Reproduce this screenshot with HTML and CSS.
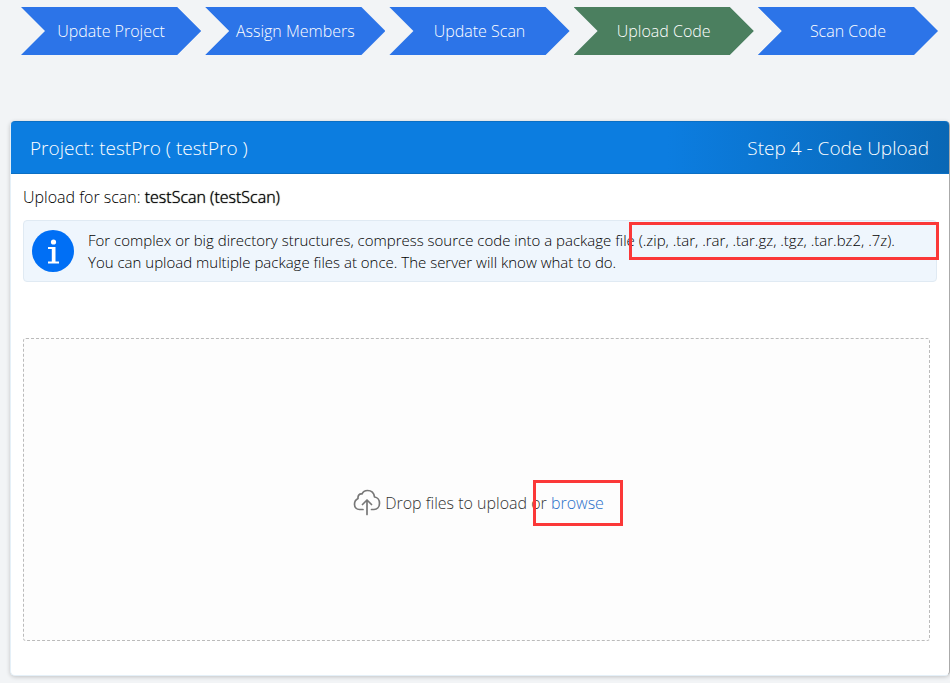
FILE: index.html
```html
<!DOCTYPE html>
<html lang="en">
<head>
<meta charset="utf-8">
<title>Code Upload</title>
<link rel="stylesheet" href="styles.css">
</head>
<body>
<nav class="steps">
  <a class="step" href="#">Update Project</a>
  <a class="step" href="#">Assign Members</a>
  <a class="step" href="#">Update Scan</a>
  <a class="step step-current" href="#">Upload Code</a>
  <a class="step" href="#">Scan Code</a>
</nav>
<main class="panel">
  <header class="panel-header">
    <h1 class="panel-title">Project: testPro ( testPro )</h1>
    <span class="panel-title">Step 4 - Code Upload</span>
  </header>
  <div class="panel-body">
    <p class="scan-name">Upload for scan: <strong>testScan (testScan)</strong></p>
    <div class="info">
      <svg class="info-icon" viewBox="0 0 42 42" aria-hidden="true">
        <circle cx="21" cy="21" r="21" fill="#006ff5"/>
        <circle cx="21.500" cy="12" r="2.600" fill="#fff"/>
        <path d="M16 17H23.500V31.500H27V33.500H16V31.500H19.800V19H16Z" fill="#fff"/>
      </svg>
      <p class="info-text">For complex or big directory structures, compress source code into a package file <span class="marked marked-types">(.zip, .tar, .rar, .tar.gz, .tgz, .tar.bz2, .7z).</span><br>You can upload multiple package files at once. The server will know what to do.</p>
    </div>
    <section class="dropzone">
      <svg class="cloud" viewBox="0 0 28 27" fill="none" stroke="#777" stroke-width="1.700" stroke-linecap="round" stroke-linejoin="round" aria-hidden="true">
        <path d="M10 20.500H6.500C3.500 20.500 1.500 18.200 1.500 15.200C1.500 12.500 3 10.500 5 9.500C4.700 6.500 6.500 4.500 9 5C10 2.500 12 1.500 14.500 1.500C18.500 1.500 21 4 21.500 8C24.500 8.300 26.500 11 26.500 14.200C26.500 18 24 20.500 21 20.500H18.500M14 25.500V11M9.500 15.500L14 11L18.500 15.500"/>
      </svg>
      <p class="drop-text">Drop files to upload or <a class="marked marked-browse" href="#">browse</a></p>
    </section>
  </div>
</main>
</body>
</html>
```
FILE: styles.css
```css
* {
  box-sizing: border-box;
}

body {
  margin: 0;
  background: #f2f4f6;
  color: #000;
  font: 300 16px/22px "Open Sans", sans-serif;
}

p,
h1 {
  margin: 0;
}

a {
  color: #2a6fc9;
  text-decoration: none;
}

.steps {
  display: flex;
  gap: 4px;
  padding: 7px 12px 0 21px;
}

.step {
  flex: 1;
  height: 48px;
  background: #2c74e8;
  clip-path: polygon(0 0, calc(100% - 24px) 0, 100% 50%, calc(100% - 24px) 100%, 0 100%, 24px 50%);
  color: #fff;
  line-height: 48px;
  text-align: center;
}

.step-current {
  background: #4b7f5f;
}

.panel {
  margin: 66px 0 7px 10px;
  border: 1px solid #e5f0f8;
  border-top: 0;
  border-right-color: #aaa;
  border-radius: 5px;
  background: #fff;
  box-shadow: 0 1px 4px rgba(0, 0, 0, 0.2);
}

.panel-header {
  display: flex;
  align-items: center;
  justify-content: space-between;
  height: 53px;
  padding: 0 20px 0 19px;
  border: 1px solid #0b6fc4;
  border-width: 1px 0;
  border-radius: 4px 4px 0 0;
  background: linear-gradient(90deg, #0c7de0 70%, #0967b5);
  color: #fff;
}

.panel-title {
  font-size: 19px;
  font-weight: 300;
  line-height: 28px;
}

.panel-body {
  padding: 12px 12px 34px;
}

strong {
  font-weight: 300;
  text-shadow: 0 0 1px #000;
}

.info {
  display: flex;
  align-items: center;
  gap: 14px;
  min-height: 62px;
  margin-top: 12px;
  padding: 8px;
  border: 1px solid #e0eaf3;
  border-radius: 4px;
  background: #eff6fd;
}

.info-icon {
  flex: none;
  width: 42px;
  height: 42px;
}

.info-text {
  font-size: 15px;
}

.dropzone {
  display: flex;
  align-items: center;
  justify-content: center;
  gap: 4px;
  min-height: 303px;
  margin: 56px 7px 0 0;
  padding: 26px 0 0 4px;
  border: 1px dashed #bbb;
  border-radius: 3px;
  background: #fdfdfd;
  color: #333;
}

.cloud {
  width: 28px;
  height: 27px;
}

.marked {
  position: relative;
}

.marked::after {
  position: absolute;
  border: 3px solid #fb3838;
  content: "";
  pointer-events: none;
}

.marked-types::after {
  inset: -8px -44px -10px -10px;
}

.marked-browse::after {
  inset: -12px -19px -12px -18px;
}
```
